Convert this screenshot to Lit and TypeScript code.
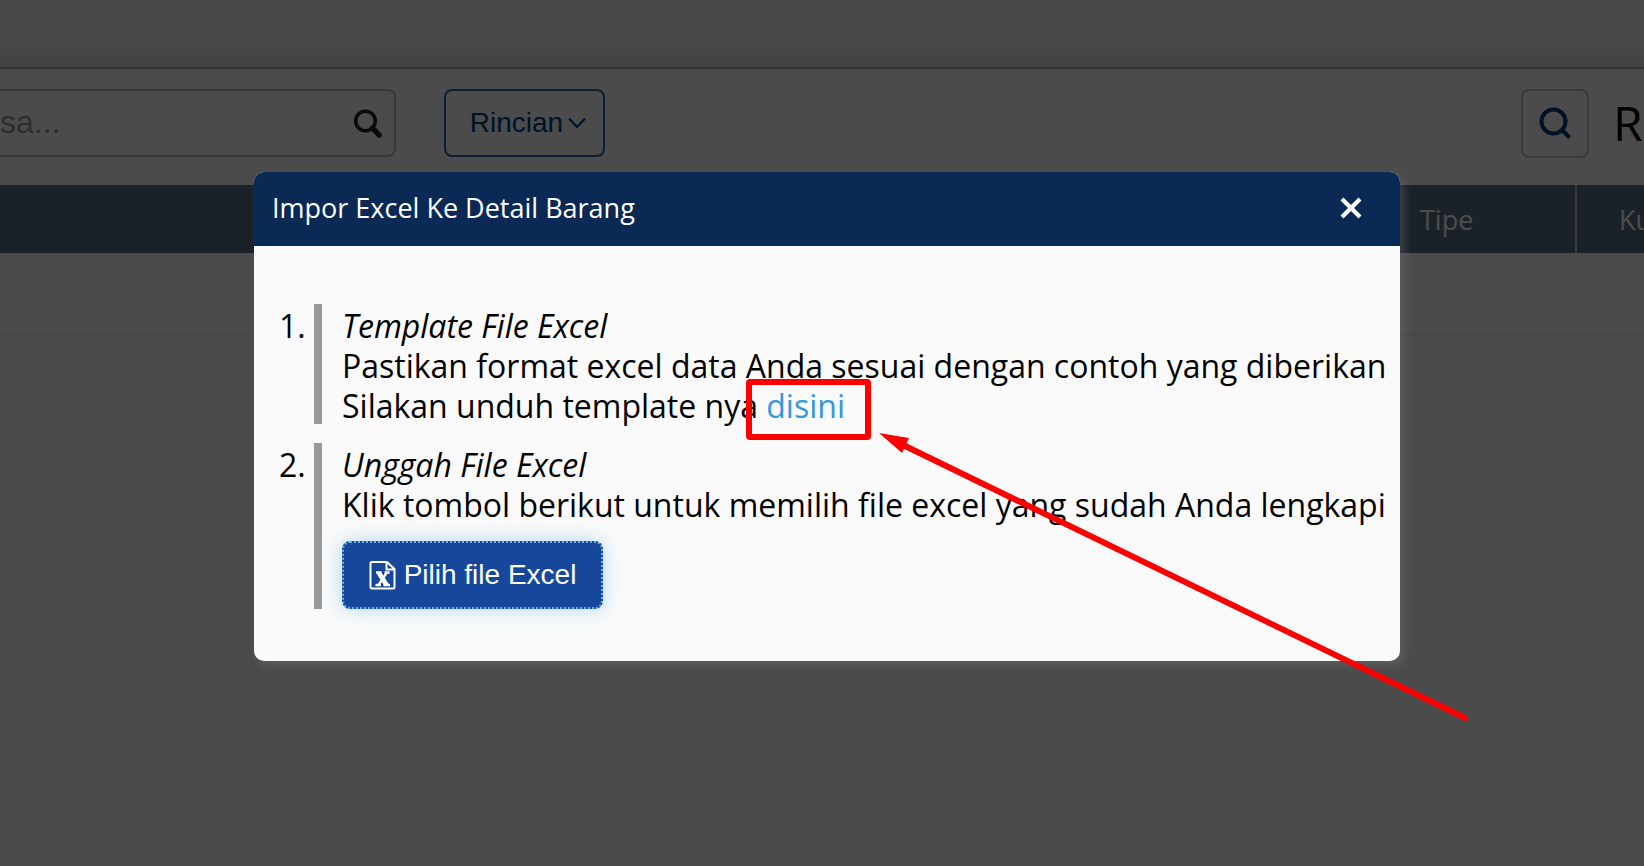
import { LitElement, html, css } from "lit";
import { customElement } from "lit/decorators.js";

@customElement("app-root")
export class AppRoot extends LitElement {
  static styles = css`
    :host {
      display: block;
      position: relative;
      min-height: 100vh;
      overflow: hidden;
      background: #fafafa;
      color: #000;
      font-family: "Open Sans", "Noto Sans", sans-serif;
      font-size: 27px;
      line-height: 40px;
    }
    * {
      box-sizing: border-box;
    }
    button,
    input {
      font-family: "Liberation Sans", Arial, sans-serif;
      font-size: 28px;
      margin: 0;
    }
    .strip {
      height: 69px;
      background: linear-gradient(#f2f2f2 60%, #dedede);
      border-bottom: 2px solid #a8a8a8;
    }
    .toolbar {
      display: flex;
      align-items: center;
      height: 116px;
      padding-bottom: 8px;
      white-space: nowrap;
    }
    .search {
      display: flex;
      align-items: center;
      width: 396px;
      height: 68px;
      padding-right: 11px;
      border: 2px solid #bebebe;
      border-left: 0;
      border-radius: 0 8px 8px 0;
    }
    .search input {
      flex: 1;
      min-width: 0;
      padding: 0 0 2px;
      border: 0;
      background: none;
      font-size: 32px;
    }
    .search input::placeholder {
      color: #999;
      opacity: 1;
    }
    .plain {
      display: flex;
      padding: 0;
      border: 0;
      background: none;
    }
    .menu {
      display: flex;
      align-items: center;
      justify-content: center;
      gap: 4px;
      width: 161px;
      height: 68px;
      margin-left: 48px;
      padding: 0 0 0 8px;
      border: 2px solid #2a68a8;
      border-radius: 8px;
      background: none;
      color: #004080;
    }
    .find {
      display: flex;
      align-items: center;
      justify-content: center;
      width: 68px;
      height: 69px;
      margin-left: auto;
      padding: 0;
      border: 2px solid #c2c2c2;
      border-radius: 8px;
      background: none;
    }
    .title {
      width: 55px;
      padding-left: 24px;
      overflow: hidden;
      font-size: 48px;
      line-height: 64px;
      font-weight: 400;
      margin: 0;
    }
    table {
      width: 100%;
      border-collapse: collapse;
      table-layout: fixed;
    }
    th {
      height: 68px;
      padding: 2px 0 0 42px;
      background: #5c718b;
      color: #fff;
      font-weight: 400;
      text-align: left;
      overflow: hidden;
      white-space: nowrap;
    }
    .type {
      width: 198px;
      border-right: 2px solid #bababa;
    }
    .qty {
      width: 68px;
    }
    td {
      height: 82px;
      padding: 0;
      border-bottom: 2px solid #f0f0f0;
    }
    .overlay {
      position: absolute;
      inset: 0;
      padding: 172px 244px 0 254px;
      background: rgba(0, 0, 0, 0.7);
    }
    .modal {
      position: relative;
      border-radius: 10px;
      background: #fafafa;
      box-shadow: 4px 4px 10px rgba(120, 120, 120, 0.4);
    }
    .head {
      display: flex;
      align-items: center;
      justify-content: space-between;
      height: 74px;
      padding: 0 38px 2px 18px;
      border-radius: 10px 10px 0 0;
      background: #0a2955;
      color: #fff;
    }
    .head h2 {
      margin: 0;
      font-size: 27px;
      font-weight: 400;
    }
    .steps {
      display: grid;
      gap: 19px;
      margin: 0;
      padding: 58px 0 52px 25px;
      list-style: none;
      font-size: 32px;
      white-space: nowrap;
    }
    .step {
      display: grid;
      grid-template-columns: 35px 1fr;
    }
    .number {
      padding-top: 2px;
    }
    .body {
      padding-left: 20px;
      border-left: 8px solid #999;
    }
    .body p {
      height: 40px;
      padding-top: 2px;
      margin: 0;
    }
    a {
      color: #3498db;
      text-decoration: none;
    }
    .pick {
      display: flex;
      align-items: center;
      justify-content: center;
      gap: 8px;
      width: 261px;
      height: 68px;
      margin-top: 18px;
      padding: 0;
      border: 2px dotted #6bb0ee;
      border-radius: 8px;
      background: #17479b;
      color: #fff;
      box-shadow: 0 0 20px rgba(52, 152, 219, 0.35);
    }
    .marks {
      position: absolute;
      left: 492px;
      top: 207px;
      pointer-events: none;
    }
  `;

  render() {
    return html`
      <div class="strip"></div>
      <header class="toolbar">
        <div class="search">
          <input type="search" placeholder="sa..." aria-label="Cari barang atau jasa" />
          <button class="plain" aria-label="Cari">
            <svg width="30" height="30" viewBox="0 0 30 30" fill="none" stroke="#222">
              <circle cx="12.500" cy="13" r="9.800" stroke-width="3.600" />
              <path d="M19.500 20 26 27" stroke-width="5.500" stroke-linecap="round" />
            </svg>
          </button>
        </div>
        <button class="menu">
          Rincian
          <svg width="20" height="20" viewBox="0 0 20 20" fill="none" stroke="#004080" stroke-width="2.200">
            <path d="M2 5.500 10 14 18 5.500" />
          </svg>
        </button>
        <button class="find" aria-label="Telusuri">
          <svg width="34" height="34" viewBox="0 0 34 34" fill="none" stroke="#004080" stroke-width="4">
            <circle cx="15.500" cy="15.500" r="12" />
            <path d="M24.500 24.500 30.500 30.500" stroke-linecap="round" />
          </svg>
        </button>
        <h1 class="title">Ri</h1>
      </header>
      <table>
        <thead>
          <tr>
            <th></th>
            <th class="type">Tipe</th>
            <th class="qty">Ku</th>
          </tr>
        </thead>
        <tbody>
          <tr><td colspan="3"></td></tr>
        </tbody>
      </table>
      <div class="overlay">
        <section class="modal" role="dialog" aria-labelledby="modal-title">
          <div class="head">
            <h2 id="modal-title">Impor Excel Ke Detail Barang</h2>
            <button class="plain" aria-label="Tutup">
              <svg width="22" height="22" viewBox="0 0 22 22" fill="none" stroke="#fff" stroke-width="4.200">
                <path d="M2 2 20 20M20 2 2 20" />
              </svg>
            </button>
          </div>
          <ol class="steps">
            <li class="step">
              <span class="number">1.</span>
              <div class="body">
                <p><em>Template File Excel</em></p>
                <p>Pastikan format excel data Anda sesuai dengan contoh yang diberikan</p>
                <p>Silakan unduh template nya <a href="#template">disini</a></p>
              </div>
            </li>
            <li class="step">
              <span class="number">2.</span>
              <div class="body">
                <p><em>Unggah File Excel</em></p>
                <p>Klik tombol berikut untuk memilih file excel yang sudah Anda lengkapi</p>
                <button class="pick">
                  <svg width="27" height="30" viewBox="0 0 27 30" fill="none" stroke="#fff" stroke-width="2">
                    <path d="M3 2H18L25.500 9V27Q25.500 28.500 24 28.500H3Q1.500 28.500 1.500 27V3.500Q1.500 2 3 2ZM17.500 2V9.500H25.500" />
                    <path d="M7 12.500H12.500M15.500 12.500H20.500M6.500 25H12M14.500 25H21M17.500 13 9.500 25" stroke-width="2.400" />
                    <path d="M10 13 17.500 25" stroke-width="4.600" />
                  </svg>
                  Pilih file Excel
                </button>
              </div>
            </li>
          </ol>
          <svg class="marks" width="730" height="350" viewBox="0 0 730 350" fill="none" stroke="#f00">
            <rect x="3" y="3" width="119" height="55" rx="1" stroke-width="6" />
            <path d="M155 65 719 339" stroke-width="6" stroke-linecap="round" />
            <path d="M133 54 163 59 156 74Z" fill="#f00" stroke="none" />
          </svg>
        </section>
      </div>
    `;
  }
}
